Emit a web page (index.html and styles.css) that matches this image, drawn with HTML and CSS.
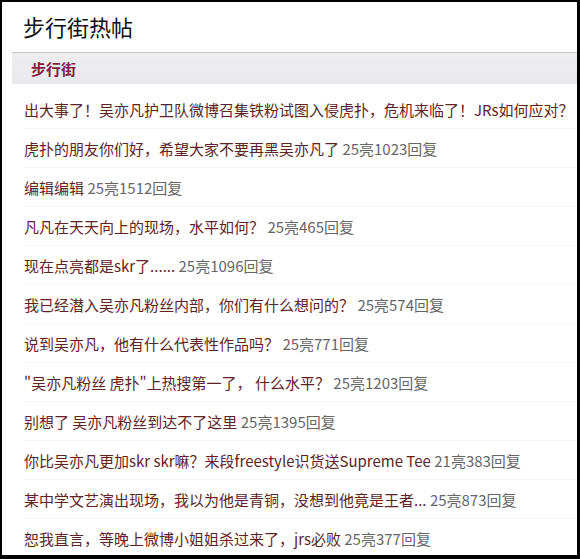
FILE: index.html
```html
<!DOCTYPE html>
<html lang="zh">
<head>
  <meta charset="UTF-8" />
  <title>步行街热帖</title>
  <link rel="stylesheet" href="styles.css">
</head>
<body>
  <div class="frame">
    <h1 class="title">步行街热帖</h1>
    <div class="bar">步行街</div>
    <ul class="posts">
      <li><a>出大事了！吴亦凡护卫队微博召集铁粉试图入侵虎扑，危机来临了！JRs如何应对？</a></li>
      <li><a>虎扑的朋友你们好，希望大家不要再黑吴亦凡了</a> <span class="stat">25亮1023回复</span></li>
      <li><a>编辑编辑</a> <span class="stat">25亮1512回复</span></li>
      <li><a>凡凡在天天向上的现场，水平如何？</a> <span class="stat">25亮465回复</span></li>
      <li><a>现在点亮都是skr了......</a> <span class="stat">25亮1096回复</span></li>
      <li><a>我已经潜入吴亦凡粉丝内部，你们有什么想问的？</a> <span class="stat">25亮574回复</span></li>
      <li><a>说到吴亦凡，他有什么代表性作品吗？</a> <span class="stat">25亮771回复</span></li>
      <li><a>"吴亦凡粉丝 虎扑"上热搜第一了， 什么水平？</a> <span class="stat">25亮1203回复</span></li>
      <li><a>别想了 吴亦凡粉丝到达不了这里</a> <span class="stat">25亮1395回复</span></li>
      <li><a>你比吴亦凡更加skr skr嘛？来段freestyle识货送Supreme Tee</a> <span class="stat">21亮383回复</span></li>
      <li><a>某中学文艺演出现场，我以为他是青铜，没想到他竟是王者...</a> <span class="stat">25亮873回复</span></li>
      <li><a>恕我直言，等晚上微博小姐姐杀过来了，jrs必败</a> <span class="stat">25亮377回复</span></li>
    </ul>
  </div>
</body>
</html>
```
FILE: styles.css
```css
html, body {
  margin: 0;
  padding: 0;
  background: #000;
}
.frame {
  box-sizing: border-box;
  width: 580px;
  height: 559px;
  border-style: solid;
  border-color: #000;
  border-width: 2px 3px 4px 2px;
  background: #fff;
  font-family: "Noto Sans CJK SC", "Noto Sans", sans-serif;
  overflow: hidden;
}
.title {
  margin: 0;
  padding: 9px 0 0 21px;
  height: 41px;
  font-size: 22px;
  font-weight: 400;
  line-height: 30px;
  color: #111;
}
.bar {
  margin-left: 10px;
  border-top: 1px solid #c4c4c4;
  height: 31px;
  line-height: 31px;
  padding-left: 19px;
  background: linear-gradient(#eeeef0, #e9e9ee);
  color: #861f3e;
  font-size: 15px;
  font-weight: bold;
}
.posts {
  list-style: none;
  margin: 6px 0 0 0;
  padding: 0;
}
.posts li {
  margin-left: 22px;
  height: 38px;
  line-height: 39px;
  border-bottom: 1px solid #f6f6f6;
  font-size: 15px;
  white-space: nowrap;
}
.posts a {
  color: #5e2424;
}
.stat {
  color: #666;
}
```
